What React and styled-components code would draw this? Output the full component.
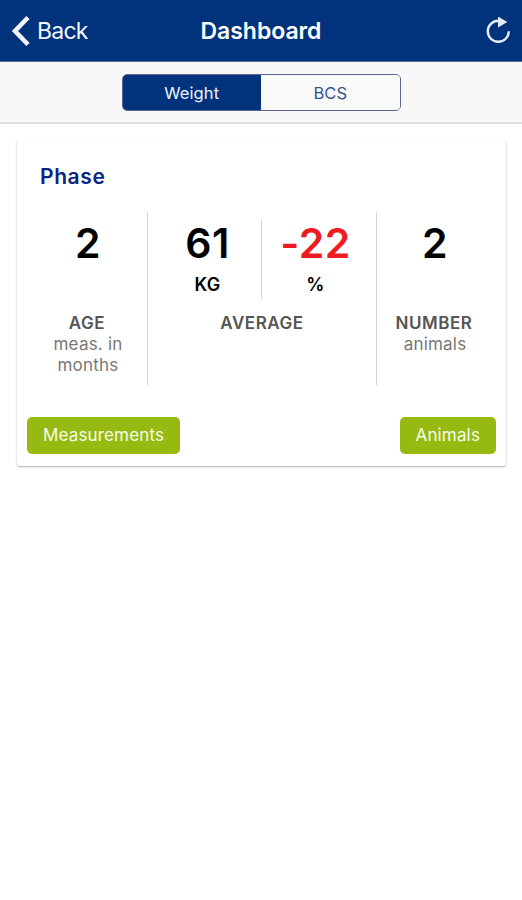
import React, { useState } from "react";
import styled, { createGlobalStyle } from "styled-components";

const GlobalStyle = createGlobalStyle`
  * {
    box-sizing: border-box;
  }

  body {
    margin: 0;
    background: #fff;
    font-family: Inter, "Liberation Sans", sans-serif;
  }

  button {
    font-family: inherit;
    margin: 0;
    padding: 0;
    border: none;
    cursor: pointer;
  }
`;

const Page = styled.div`
  width: 100%;
  min-height: 900px;
  background: #fff;
`;

const Header = styled.header`
  display: grid;
  grid-template-columns: 1fr auto 1fr;
  align-items: center;
  height: 62px;
  padding: 0 11px;
  background: #00337c;
  border-bottom: 1px solid #5c6a9c;
  color: #fff;
`;

const BackButton = styled.button`
  display: flex;
  align-items: center;
  gap: 7px;
  background: none;
  color: #f1f4fb;
  font-size: 23px;
  line-height: 30px;
  letter-spacing: -0.75px;
`;

const Title = styled.h1`
  margin: 0;
  font-size: 23px;
  line-height: 30px;
  font-weight: 600;
  letter-spacing: -0.05px;
`;

const RefreshButton = styled.button`
  display: flex;
  justify-self: end;
  background: none;
  color: #e6ebf8;
`;

const Toolbar = styled.div`
  display: flex;
  justify-content: center;
  height: 62px;
  padding-top: 12px;
  background: #f8f8f8;
  border-bottom: 2px solid #dfdfdf;
`;

const Segment = styled.div`
  display: flex;
  width: 279px;
  height: 37px;
  border: 1px solid #5a6596;
  border-radius: 5px;
  overflow: hidden;
`;

const SegmentButton = styled.button`
  flex: 1;
  background: ${(props) => (props.$active ? "#00337c" : "#fafafa")};
  color: ${(props) => (props.$active ? "#eef2fa" : "#33558f")};
  font-size: 16.5px;
  line-height: 20px;
  letter-spacing: 0.1px;
`;

const Card = styled.section`
  margin: 15px 16px 0 17px;
  height: 327px;
  background: #fff;
  border-radius: 3px;
  box-shadow: 0 1px 2px rgba(0, 0, 0, 0.32);
`;

const CardTitle = styled.h2`
  margin: 0;
  padding: 24px 23px 0;
  color: #0a2482;
  font-size: 21px;
  line-height: 28px;
  font-weight: 600;
  letter-spacing: 0.6px;
`;

const Stats = styled.div`
  display: grid;
  grid-template-columns: 119px 229px 1fr;
  height: 173px;
  margin: 21px 13px 0 12px;
`;

const Stat = styled.div`
  padding-top: 7px;
  text-align: center;
  border-right: ${(props) => (props.$last ? "none" : "1px solid #d4d4d4")};
`;

const Split = styled.div`
  display: grid;
  grid-template-columns: 1fr 1fr;
  margin-bottom: 14px;
`;

const Half = styled.div`
  height: 80px;
  border-right: ${(props) => (props.$last ? "none" : "1px solid #d4d4d4")};
  padding-left: ${(props) => (props.$last ? 0 : 6)}px;
  padding-right: ${(props) => (props.$last ? 7 : 0)}px;
`;

const Value = styled.div`
  height: 50px;
  color: ${(props) => (props.$negative ? "#ee1c22" : "#000")};
  font-size: 41px;
  line-height: 49px;
  font-weight: 600;
  letter-spacing: 0.4px;
`;

const Unit = styled.div`
  padding-top: 5px;
  color: #000;
  font-size: 18px;
  line-height: 22px;
  font-weight: 600;
  letter-spacing: 0.3px;
`;

const Label = styled.div`
  margin-top: ${(props) => (props.$spaced ? 44 : 0)}px;
  padding-right: ${(props) => (props.$spaced ? 2 : 0)}px;
  color: #555;
  font-size: 17px;
  line-height: 21px;
  font-weight: 600;
  letter-spacing: 0.55px;
`;

const Note = styled.div`
  color: #777;
  font-size: 17px;
  line-height: 21px;
  letter-spacing: 0.2px;
`;

const Actions = styled.div`
  display: flex;
  justify-content: space-between;
  padding: 32px 10px 0;
`;

const ActionButton = styled.button`
  height: 37px;
  padding: 0 16px 1px;
  border-radius: 5px;
  background: #97ba12;
  color: #f6faea;
  font-size: 17px;
  line-height: 20px;
  letter-spacing: 0.15px;
`;

const BackIcon = () => (
  <svg width="19" height="32" viewBox="0 0 19 32" fill="none">
    <path d="M17 2.5 4 16l13 13.5" stroke="currentColor" strokeWidth="4.6" />
  </svg>
);

const RefreshIcon = () => (
  <svg width="26" height="28" viewBox="0 0 26 28" fill="none">
    <path
      d="M23.8 14.3A10.5 10.5 0 1 1 13.3 3.8"
      stroke="currentColor"
      strokeWidth="2.4"
    />
    <path d="M13-.5v11L22.3 5z" fill="currentColor" />
  </svg>
);

const tabs = ["Weight", "BCS"];

export default function App() {
  const [tab, setTab] = useState("Weight");

  return (
    <Page>
      <GlobalStyle />
      <Header>
        <BackButton>
          <BackIcon />
          Back
        </BackButton>
        <Title>Dashboard</Title>
        <RefreshButton aria-label="Refresh">
          <RefreshIcon />
        </RefreshButton>
      </Header>
      <Toolbar>
        <Segment>
          {tabs.map((name) => (
            <SegmentButton
              key={name}
              $active={name === tab}
              onClick={() => setTab(name)}
            >
              {name}
            </SegmentButton>
          ))}
        </Segment>
      </Toolbar>
      <Card>
        <CardTitle>Phase</CardTitle>
        <Stats>
          <Stat>
            <Value>2</Value>
            <Label $spaced>AGE</Label>
            <Note>meas. in</Note>
            <Note>months</Note>
          </Stat>
          <Stat>
            <Split>
              <Half>
                <Value>61</Value>
                <Unit>KG</Unit>
              </Half>
              <Half $last>
                <Value $negative>-22</Value>
                <Unit>%</Unit>
              </Half>
            </Split>
            <Label>AVERAGE</Label>
          </Stat>
          <Stat $last>
            <Value>2</Value>
            <Label $spaced>NUMBER</Label>
            <Note>animals</Note>
          </Stat>
        </Stats>
        <Actions>
          <ActionButton>Measurements</ActionButton>
          <ActionButton>Animals</ActionButton>
        </Actions>
      </Card>
    </Page>
  );
}
